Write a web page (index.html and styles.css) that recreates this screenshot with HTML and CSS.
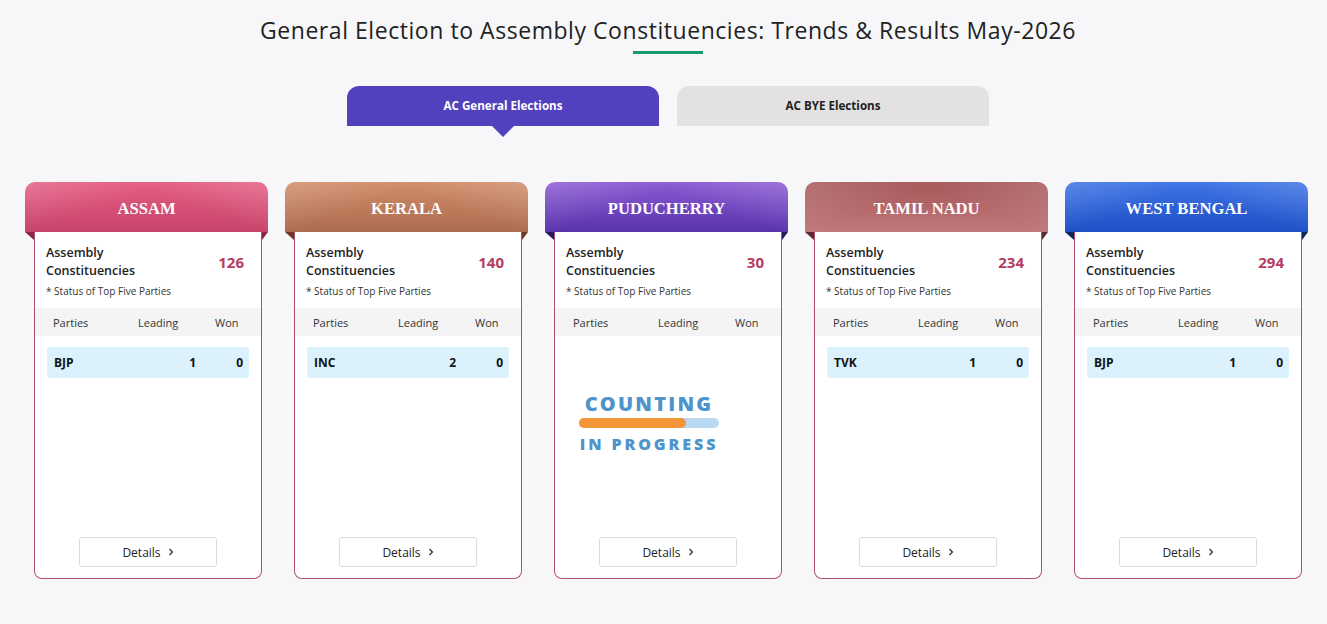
FILE: index.html
```html
<!DOCTYPE html>
<html>
<head>
  <title>Trends &amp; Results</title>
  <link rel="stylesheet" href="styles.css">
</head>
<body>
  <h1 class="page-title">General Election to Assembly Constituencies: Trends &amp; Results May-2026</h1>
  <div class="title-line"></div>

  <nav class="tabs">
    <a href="#" class="tab active">AC General Elections</a>
    <a href="#" class="tab">AC BYE Elections</a>
  </nav>

  <main class="cards">
    <section class="card assam">
      <div class="card-head">ASSAM</div>
      <div class="card-body">
        <div class="ac-row">
          <span class="ac-label">Assembly<br>Constituencies</span>
          <span class="ac-count">126</span>
        </div>
        <p class="note">* Status of Top Five Parties</p>
        <div class="table-head"><span>Parties</span><span>Leading</span><span>Won</span></div>
        <div class="party-row"><span>BJP</span><span class="num">1</span><span class="num">0</span></div>
        <a href="#" class="details">Details <svg width="6" height="8" viewBox="0 0 6 8"><polyline points="1.5,1 4.5,4 1.5,7" fill="none" stroke="#222" stroke-width="1.1"/></svg></a>
      </div>
    </section>

    <section class="card kerala">
      <div class="card-head">KERALA</div>
      <div class="card-body">
        <div class="ac-row">
          <span class="ac-label">Assembly<br>Constituencies</span>
          <span class="ac-count">140</span>
        </div>
        <p class="note">* Status of Top Five Parties</p>
        <div class="table-head"><span>Parties</span><span>Leading</span><span>Won</span></div>
        <div class="party-row"><span>INC</span><span class="num">2</span><span class="num">0</span></div>
        <a href="#" class="details">Details <svg width="6" height="8" viewBox="0 0 6 8"><polyline points="1.5,1 4.5,4 1.5,7" fill="none" stroke="#222" stroke-width="1.1"/></svg></a>
      </div>
    </section>

    <section class="card puducherry">
      <div class="card-head">PUDUCHERRY</div>
      <div class="card-body">
        <div class="ac-row">
          <span class="ac-label">Assembly<br>Constituencies</span>
          <span class="ac-count">30</span>
        </div>
        <p class="note">* Status of Top Five Parties</p>
        <div class="table-head"><span>Parties</span><span>Leading</span><span>Won</span></div>
        <div class="counting">
          <div class="counting-top">COUNTING</div>
          <div class="counting-bar"><div class="counting-fill"></div></div>
          <div class="counting-bottom">IN PROGRESS</div>
        </div>
        <a href="#" class="details">Details <svg width="6" height="8" viewBox="0 0 6 8"><polyline points="1.5,1 4.5,4 1.5,7" fill="none" stroke="#222" stroke-width="1.1"/></svg></a>
      </div>
    </section>

    <section class="card tamilnadu">
      <div class="card-head">TAMIL NADU</div>
      <div class="card-body">
        <div class="ac-row">
          <span class="ac-label">Assembly<br>Constituencies</span>
          <span class="ac-count">234</span>
        </div>
        <p class="note">* Status of Top Five Parties</p>
        <div class="table-head"><span>Parties</span><span>Leading</span><span>Won</span></div>
        <div class="party-row"><span>TVK</span><span class="num">1</span><span class="num">0</span></div>
        <a href="#" class="details">Details <svg width="6" height="8" viewBox="0 0 6 8"><polyline points="1.5,1 4.5,4 1.5,7" fill="none" stroke="#222" stroke-width="1.1"/></svg></a>
      </div>
    </section>

    <section class="card westbengal">
      <div class="card-head">WEST BENGAL</div>
      <div class="card-body">
        <div class="ac-row">
          <span class="ac-label">Assembly<br>Constituencies</span>
          <span class="ac-count">294</span>
        </div>
        <p class="note">* Status of Top Five Parties</p>
        <div class="table-head"><span>Parties</span><span>Leading</span><span>Won</span></div>
        <div class="party-row"><span>BJP</span><span class="num">1</span><span class="num">0</span></div>
        <a href="#" class="details">Details <svg width="6" height="8" viewBox="0 0 6 8"><polyline points="1.5,1 4.5,4 1.5,7" fill="none" stroke="#222" stroke-width="1.1"/></svg></a>
      </div>
    </section>
  </main>
</body>
</html>
```

FILE: styles.css
```css
body {
  margin: 0;
  padding: 0 0 0 9px;
  background-color: #f7f7f9;
  font-family: 'Open Sans', Arial, sans-serif;
  color: #222;
}

.page-title {
  margin: 0;
  padding-top: 15px;
  font-size: 23px;
  font-weight: 500;
  line-height: 30px;
  letter-spacing: 0.55px;
  text-align: center;
  color: #222;
}

.title-line {
  width: 70px;
  height: 3px;
  margin: 6px auto 0;
  background-color: #1b9a6c;
}

/* tabs */
.tabs {
  display: flex;
  justify-content: center;
  gap: 18px;
  margin-top: 32px;
}

.tab {
  position: relative;
  width: 312px;
  height: 40px;
  display: flex;
  align-items: center;
  justify-content: center;
  border-radius: 12px 12px 0 0;
  background-color: #e3e1e1;
  color: #222;
  font-size: 11.6px;
  font-weight: 700;
  text-decoration: none;
  padding-bottom: 1px;
  box-sizing: border-box;
}

.tab.active {
  background-color: #5141be;
  color: #fff;
}

.tab.active::after {
  content: '';
  position: absolute;
  left: 145px;
  top: 100%;
  border-left: 11px solid transparent;
  border-right: 11px solid transparent;
  border-top: 11px solid #5141be;
}

/* cards */
.cards {
  display: flex;
  justify-content: center;
  gap: 17px;
  margin-top: 56px;
  padding-right: 3px;
}

.card {
  width: 243px;
  --c1: #e45d83;
  --c2: #c7446a;
  --fold: #8c2444;
}

.card.kerala { --c1: #d08c69; --c2: #ad6c4f; --fold: #6b3a27; }
.card.puducherry { --c1: #8a5ad2; --c2: #5934ad; --fold: #2b175e; }
.card.tamilnadu { --c1: #a65558; --c2: #c17a7c; --fold: #5a2a30; }
.card.westbengal { --c1: #3c72e4; --c2: #1f50c6; --fold: #10255c; }

.card-head {
  position: relative;
  height: 50px;
  line-height: 53px;
  border-radius: 10px 10px 0 0;
  background:
    linear-gradient(160deg, rgba(255, 255, 255, 0.16) 0, rgba(255, 255, 255, 0) 38%),
    linear-gradient(200deg, rgba(255, 255, 255, 0.16) 0, rgba(255, 255, 255, 0) 38%),
    linear-gradient(to bottom, var(--c1), var(--c2));
  color: #fff;
  font-family: 'Liberation Serif', 'Times New Roman', serif;
  font-size: 16.6px;
  font-weight: 700;
  text-align: center;
}

.card-head::before,
.card-head::after {
  content: '';
  position: absolute;
  top: 100%;
  height: 8px;
  background-color: var(--fold);
}

.card-head::before {
  left: 0;
  width: 9px;
  clip-path: polygon(0 0, 100% 0, 100% 100%);
}

.card-head::after {
  right: 0;
  width: 6px;
  clip-path: polygon(0 0, 100% 0, 0 100%);
}

.card-body {
  height: 347px;
  box-sizing: border-box;
  margin: 0 6px 0 9px;
  padding-top: 12px;
  display: flex;
  flex-direction: column;
  background-color: #fff;
  border: 1px solid #b34d6e;
  border-top: none;
  border-radius: 0 0 8px 8px;
}

.ac-row {
  display: flex;
  justify-content: space-between;
  align-items: center;
  padding: 0 17px 0 11px;
}

.ac-label {
  font-size: 12.5px;
  font-weight: 600;
  line-height: 18px;
  color: #222;
}

.ac-count {
  font-size: 15px;
  font-weight: 700;
  color: #b63c60;
}

.note {
  margin: 4px 0 0;
  padding-left: 11px;
  font-size: 10px;
  line-height: 14px;
  color: #333;
}

.table-head {
  display: grid;
  grid-template-columns: 85px 77px auto;
  height: 28px;
  align-items: center;
  margin-top: 10px;
  padding-left: 18px;
  background-color: #f4f4f4;
  font-size: 11px;
  color: #333;
}

.party-row {
  display: grid;
  grid-template-columns: 1fr 40px 47px;
  height: 31px;
  align-items: center;
  margin: 11px 12px 0;
  padding: 0 6px 0 7px;
  border-radius: 2px;
  background-color: #dbf1fb;
  font-size: 12px;
  font-weight: 700;
  color: #111;
}

.party-row .num {
  text-align: right;
}

/* counting in progress */
.counting {
  width: 140px;
  margin: 57px 0 0 24px;
  text-align: center;
  font-weight: 800;
  color: #4f93cb;
}

.counting-top {
  font-size: 20px;
  line-height: 22px;
  letter-spacing: 2.2px;
}

.counting-bar {
  height: 10px;
  margin-top: 3px;
  border-radius: 5px;
  background-color: #b9d8f1;
}

.counting-fill {
  width: 107px;
  height: 10px;
  border-radius: 5px;
  background-color: #f3963a;
}

.counting-bottom {
  margin-top: 6px;
  font-size: 16px;
  line-height: 20px;
  letter-spacing: 2.9px;
}

.details {
  display: flex;
  align-items: center;
  justify-content: center;
  gap: 7px;
  width: 138px;
  height: 30px;
  box-sizing: border-box;
  margin: auto auto 11px;
  border: 1px solid #dcdcdc;
  border-radius: 3px;
  font-size: 12px;
  color: #222;
  text-decoration: none;
}
```
